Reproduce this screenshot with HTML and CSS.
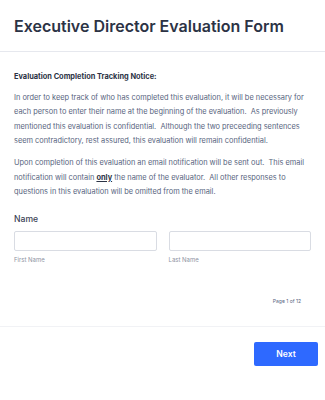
FILE: index.html
```html
<!DOCTYPE html>
<html lang="en">
<head>
    <meta charset="UTF-8">
    <meta name="viewport" content="width=device-width, initial-scale=1.0">
    <title>Executive Director Evaluation Form</title>
    <link rel="stylesheet" href="styles.css">
</head>
<body>
    <div class="form">
        <div class="form-header">
            <h1 class="form-title">Executive Director Evaluation Form</h1>
        </div>

        <div class="form-body">
            <div class="notice">
                <p class="notice-title">Evaluation Completion Tracking Notice:</p>
                <p>In order to keep track of who has completed this evaluation, it will be necessary for each person to enter their name at the beginning of the evaluation.&nbsp; As previously mentioned this evaluation is confidential.&nbsp; Although the two preceeding sentences seem contradictory, rest assured, this evaluation will remain confidential.</p>
                <p>Upon completion of this evaluation an email notification will be sent out.&nbsp; This email notification will contain <strong class="underline">only</strong> the name of the evaluator.&nbsp; All other responses to questions in this evaluation will be omitted from the email.</p>
            </div>

            <div class="field">
                <label class="field-label">Name</label>
                <div class="field-row">
                    <div class="field-col">
                        <input type="text" class="input">
                        <span class="sublabel">First Name</span>
                    </div>
                    <div class="field-col">
                        <input type="text" class="input">
                        <span class="sublabel">Last Name</span>
                    </div>
                </div>
            </div>

            <div class="page-count">Page 1 of 12</div>
        </div>

        <div class="form-footer">
            <button class="button">Next</button>
        </div>
    </div>
</body>
</html>
```

FILE: styles.css
```css
:root {
    --title-color: #2c3345;
    --text-color: #57647e;
    --border-color: #e6e8ee;
    --input-border: #d9dce3;
    --primary-color: #2e69ff;
}

* {
    margin: 0;
    padding: 0;
    box-sizing: border-box;
    font-family: Inter, "Noto Sans", sans-serif;
}

body {
    background: white;
}

.form-header {
    padding: 16px 14px 15px;
    border-bottom: 1px solid var(--border-color);
}

.form-title {
    font-size: 16px;
    font-weight: 600;
    color: var(--title-color);
    line-height: 20px;
}

.form-body {
    padding: 18px 14px 0;
}

.notice {
    font-size: 7.4px;
    line-height: 14.6px;
    color: var(--text-color);
}

.notice p {
    margin-bottom: 7px;
}

.notice .notice-title {
    font-weight: 700;
    color: var(--title-color);
    margin-bottom: 6px;
}

.underline {
    color: var(--title-color);
    text-decoration: underline;
}

.field {
    margin-top: 13px;
}

.field-label {
    display: block;
    font-size: 8.6px;
    font-weight: 500;
    color: #3a4255;
    line-height: 12px;
    margin-bottom: 6px;
}

.field-row {
    display: flex;
    gap: 12px;
}

.field-col {
    flex: 1;
    min-width: 0;
    display: flex;
    flex-direction: column;
}

.input {
    width: 100%;
    height: 20px;
    border: 1px solid var(--input-border);
    border-radius: 2px;
    background: white;
}

.sublabel {
    font-size: 6px;
    line-height: 8px;
    color: #8d93a3;
    margin-top: 5px;
}

.page-count {
    text-align: right;
    font-size: 5px;
    line-height: 8px;
    color: #57647e;
    padding: 33px 10px 21px 0;
}

.form-footer {
    border-top: 1px solid #f1f2f5;
    display: flex;
    justify-content: flex-end;
    padding: 15px 7px;
}

.button {
    background: var(--primary-color);
    color: white;
    border: none;
    border-radius: 2px;
    width: 64px;
    height: 24px;
    font-size: 8.6px;
    font-weight: 600;
}
```
